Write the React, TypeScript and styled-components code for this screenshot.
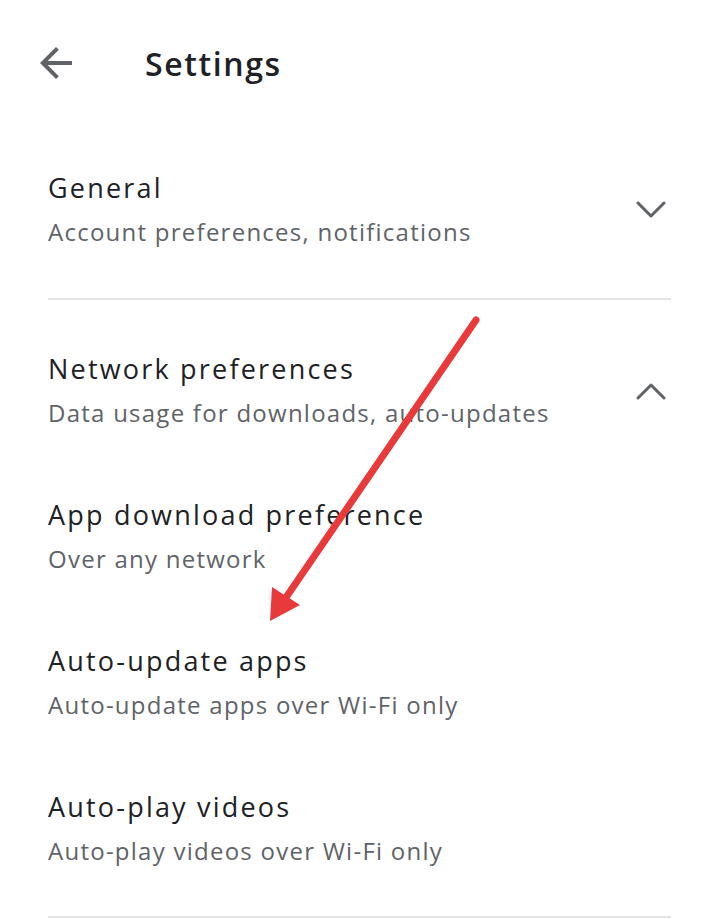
import React from "react";
import styled, { createGlobalStyle } from "styled-components";

const Global = createGlobalStyle`
  html, body { margin: 0; padding: 0; background: #ffffff; }
  body { font-family: "Open Sans", Roboto, Arial, sans-serif; -webkit-font-smoothing: antialiased; }
`;

const Page = styled.div`
  position: relative;
  width: 719px;
  height: 919px;
  overflow: hidden;
  background: #fff;
`;

const Header = styled.header`
  height: 126px;
  display: flex;
  align-items: center;
  padding-left: 32px;
`;

const BackButton = styled.div`
  width: 48px;
  height: 48px;
  display: flex;
  align-items: center;
  justify-content: center;
  color: #5f6368;
`;

const Title = styled.h1`
  margin: 0 0 0 65px;
  font-size: 32px;
  font-weight: 600;
  color: #202124;
  letter-spacing: 1.6px;
`;

const Content = styled.main`
  margin: 0 48px;
  display: flex;
  flex-direction: column;
`;

const Section = styled.section<{ $top: number; $bottom: number }>`
  display: flex;
  align-items: center;
  justify-content: space-between;
  padding: ${(p) => p.$top}px 0 ${(p) => p.$bottom}px;
`;

const Texts = styled.div`
  display: flex;
  flex-direction: column;
  gap: 4px;
`;

const ItemTitle = styled.div`
  font-size: 27px;
  line-height: 40px;
  color: #202124;
  letter-spacing: 2.2px;
`;

const ItemSub = styled.div`
  font-size: 24px;
  line-height: 40px;
  color: #5f6368;
  letter-spacing: 1.25px;
`;

const Chevron = styled.svg`
  margin-right: 5px;
  color: #5f6368;
`;

const Divider = styled.hr<{ $mt?: number }>`
  margin: ${(p) => p.$mt ?? 0}px 0 0;
  border: 0;
  height: 2px;
  background: #e3e4e6;
`;

const SubItem = styled.div`
  padding: 31px 0;
`;

const Annotation = styled.svg`
  position: absolute;
  left: 0;
  top: 0;
  pointer-events: none;
`;

const ChevronIcon = ({ up }: { up?: boolean }) => (
  <Chevron width="30" height="18" viewBox="0 0 30 18">
    <polyline
      points={up ? "2,16 15,3 28,16" : "2,2 15,15 28,2"}
      fill="none"
      stroke="currentColor"
      strokeWidth="3"
      strokeLinecap="round"
      strokeLinejoin="round"
    />
  </Chevron>
);

const items = [
  { title: "App download preference", sub: "Over any network" },
  { title: "Auto-update apps", sub: "Auto-update apps over Wi-Fi only" },
  { title: "Auto-play videos", sub: "Auto-play videos over Wi-Fi only" },
];

export default function App() {
  return (
    <Page>
      <Global />
      <Header>
        <BackButton>
          <svg width="48" height="48" viewBox="0 0 24 24">
            <path
              d="M20 11H7.83l5.59-5.59L12 4l-8 8 8 8 1.41-1.41L7.83 13H20v-2z"
              fill="currentColor"
            />
          </svg>
        </BackButton>
        <Title>Settings</Title>
      </Header>
      <Content>
        <Section $top={42} $bottom={46}>
          <Texts>
            <ItemTitle>General</ItemTitle>
            <ItemSub>Account preferences, notifications</ItemSub>
          </Texts>
          <ChevronIcon />
        </Section>
        <Divider />
        <Section $top={49} $bottom={31}>
          <Texts>
            <ItemTitle>Network preferences</ItemTitle>
            <ItemSub>Data usage for downloads, auto-updates</ItemSub>
          </Texts>
          <ChevronIcon up />
        </Section>
        {items.map((it) => (
          <SubItem key={it.title}>
            <Texts>
              <ItemTitle>{it.title}</ItemTitle>
              <ItemSub>{it.sub}</ItemSub>
            </Texts>
          </SubItem>
        ))}
        <Divider $mt={14} />
      </Content>
      <Annotation width="719" height="919" viewBox="0 0 719 919">
        <line x1="476" y1="320" x2="287" y2="596" stroke="#e83a3a" strokeWidth="7" strokeLinecap="round" />
        <polygon points="270,621 272,587 300,605" fill="#e83a3a" />
      </Annotation>
    </Page>
  );
}
